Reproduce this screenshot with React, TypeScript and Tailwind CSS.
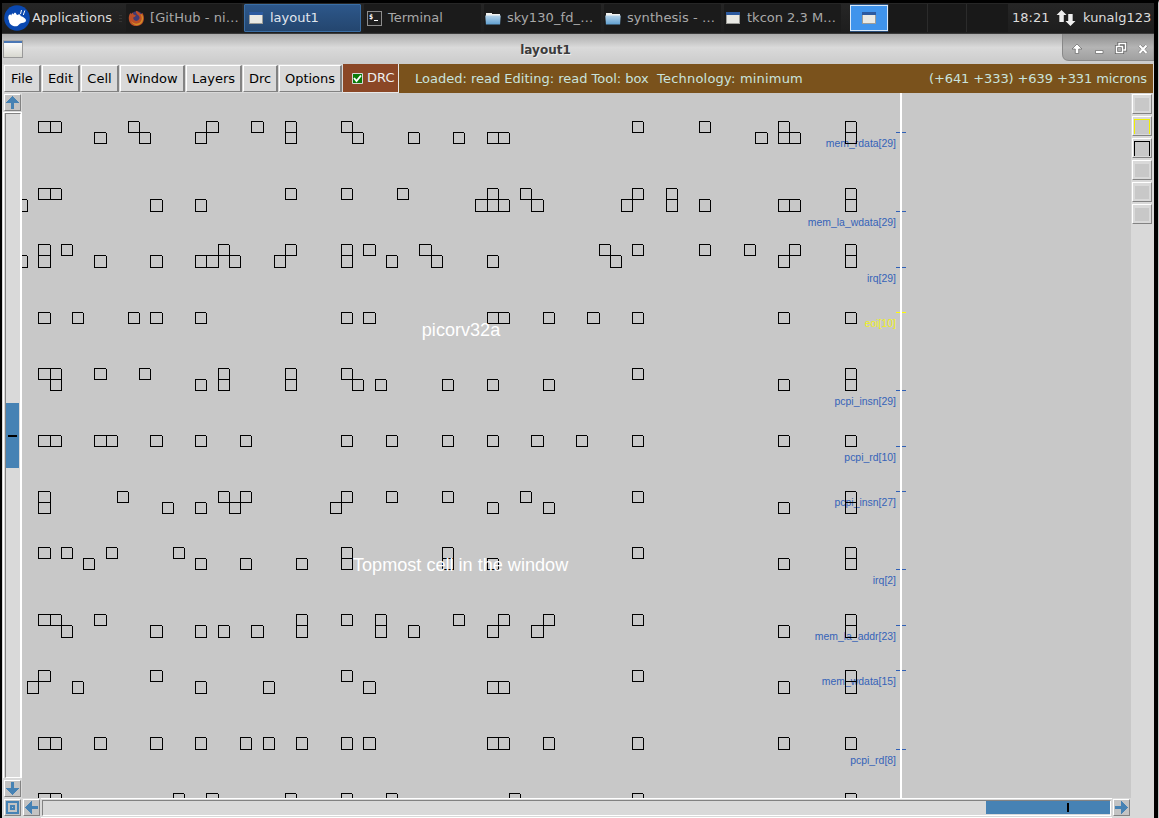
import type { ReactNode } from "react";

type Row = { y: number[]; top: number[]; bottom?: number[] };

const rows: Row[] = [
  { y: [121, 132, 143], top: [0, 1, 8, 15, 19, 22, 27, 53, 59, 66, 72], bottom: [5, 9, 14, 22, 28, 33, 37, 40, 41, 64, 66, 67, 72] },
  { y: [188, 199, 211], top: [0, 1, 22, 27, 32, 40, 43, 53, 56, 72], bottom: [-2, 10, 14, 39, 40, 41, 44, 52, 56, 59, 66, 67, 72] },
  { y: [244, 255, 267], top: [0, 2, 16, 22, 27, 29, 34, 50, 53, 59, 63, 67, 72], bottom: [-2, 0, 5, 10, 14, 15, 17, 21, 27, 31, 35, 40, 51, 66, 72] },
  { y: [312, 323], top: [0, 3, 8, 10, 14, 27, 29, 40, 41, 45, 49, 53, 66, 72] },
  { y: [368, 379, 390], top: [0, 1, 5, 9, 16, 22, 27, 53, 72], bottom: [1, 14, 16, 22, 28, 30, 36, 40, 45, 66, 72] },
  { y: [435, 446], top: [0, 1, 5, 6, 10, 14, 18, 27, 31, 36, 40, 44, 48, 53, 66, 72] },
  { y: [491, 502, 513], top: [0, 7, 16, 18, 27, 31, 36, 43, 53, 72], bottom: [0, 11, 14, 17, 26, 40, 45, 66, 72] },
  { y: [547, 558, 569], top: [0, 2, 6, 12, 27, 36, 53, 72], bottom: [4, 14, 18, 23, 27, 36, 40, 66, 72] },
  { y: [614, 625, 637], top: [0, 1, 5, 23, 27, 30, 37, 41, 45, 53, 72], bottom: [2, 10, 14, 16, 19, 23, 30, 33, 40, 44, 66, 72] },
  { y: [670, 681, 693], top: [0, 10, 27, 53, 72], bottom: [-1, 3, 14, 20, 29, 40, 41, 66, 72] },
  { y: [737, 749], top: [0, 1, 5, 10, 14, 18, 20, 23, 27, 29, 40, 41, 45, 53, 66, 72] },
  { y: [793, 804], top: [0, 1, 12, 15, 22, 27, 31, 42, 53, 72] },
];

const pins: [string, number][] = [
  ["mem_rdata[29]", 132],
  ["mem_la_wdata[29]", 211],
  ["irq[29]", 267],
  ["eoi[10]", 312],
  ["pcpi_insn[29]", 390],
  ["pcpi_rd[10]", 446],
  ["pcpi_insn[27]", 491],
  ["irq[2]", 569],
  ["mem_la_addr[23]", 625],
  ["mem_wdata[15]", 670],
  ["pcpi_rd[8]", 749],
];

const gridX = (n: number) => (n === 60 ? 710 : Math.floor(38.92 + 11.2042 * n));

function cell(n: number, y0: number, y1: number) {
  const x0 = gridX(n);
  const x1 = gridX(n + 1);
  const w = x1 - x0;
  const h = y1 - y0;
  return `M${x0} ${y0}h${w}v1h${-w}zM${x0} ${y0}h1v${h + 1}h-1zM${x0} ${y1}h${w + 1}v1h${-w - 1}zM${x1} ${y0 + 1}h1v${h}h-1z`;
}

function LayoutCanvas() {
  return (
    <svg className="block shrink-0 bg-[#c8c8c8]" width="1109" height="705" viewBox="22 93 1109 705">
      {pins.map(([name, y]) => (
        <text key={name} x="896" y={y + 15} textAnchor="end" fontSize="10.45" fontFamily="Liberation Sans, Arial, sans-serif" fill={name === "eoi[10]" ? "#f0f020" : "#3563b8"}>
          {name}
        </text>
      ))}
      <g shapeRendering="crispEdges">
        {rows.map((r) => (
          <g key={r.y[0]} fill="#000">
            <path d={r.top.map((n) => cell(n, r.y[0], r.y[1])).join("")} />
            {r.bottom && <path d={r.bottom.map((n) => cell(n, r.y[1], r.y[2])).join("")} />}
          </g>
        ))}
        {pins.map(([name, y]) => (
          <rect key={name} x="896" y={y} width="10" height="1" fill={name === "eoi[10]" ? "#ffff00" : "#2f5fb5"} />
        ))}
        <rect x="900" y="93" width="2" height="705" fill="#fff" />
      </g>
      <g fontFamily="Liberation Sans, Arial, sans-serif" fontSize="18.1" fill="#fff">
        <text x="421.8" y="336">picorv32a</text>
        <text x="353" y="571">Topmost cell in the window</text>
      </g>
    </svg>
  );
}

function WindowIcon() {
  return (
    <svg width="14" height="12" viewBox="0 0 14 12" className="shrink-0" shapeRendering="crispEdges">
      <rect width="14" height="12" fill="#9c9c98" />
      <rect width="14" height="3" fill="#2c5aa0" />
      <rect x="1" y="3" width="12" height="8" fill="#e9e9e4" />
    </svg>
  );
}

function FolderIcon() {
  return (
    <svg width="16" height="13" viewBox="0 0 16 13" className="shrink-0">
      <defs>
        <linearGradient id="folder" x1="0" y1="0" x2="0" y2="1">
          <stop offset="0" stopColor="#b5d3ea" />
          <stop offset="1" stopColor="#5f9fd0" />
        </linearGradient>
      </defs>
      <path d="M1 2V1h6v1h8v3H1z" fill="#f2f2f0" />
      <path d="M.3 3.5h15.4l-.6 9H.9z" fill="url(#folder)" />
    </svg>
  );
}

function TerminalIcon() {
  return (
    <svg width="15" height="15" viewBox="0 0 15 15" className="shrink-0">
      <rect x=".5" y=".5" width="14" height="14" fill="#202020" stroke="#8d8d8d" />
      <text x="2" y="8" fontSize="7" fontWeight="bold" fontFamily="DejaVu Sans Mono, monospace" fill="#fff">$</text>
      <path d="M7 9.5h4" stroke="#fff" />
    </svg>
  );
}

function FirefoxIcon() {
  return (
    <svg width="17" height="17" viewBox="0 0 17 17" className="shrink-0 opacity-85">
      <circle cx="8.8" cy="8" r="6.7" fill="#494083" />
      <path d="M8 .8c3 1 3.5 2.5 4.5 3.3 1 .3 1.8-1 2-1 3 5 1.300 13-5.800 13C3 16.200.5 12 .8 7.500 1 5.400 1.600 4 2.500 2.800L3.200 4.300 4.500 2.600 5.500 4.600 8 5.400 6.800 6.800 5.200 7.500C5 10 7.500 11.800 9.700 10.400 13 8.400 11.200 5.600 9.500 4.700 8.500 3.700 7.700 2.500 8 .8z" fill="#d9572a" />
      <path d="M12.500 4.100c2.200 3.400 1.500 7.700-2 9.200-4 1.300-6.700-.8-7.500-2.700.9 3 3.400 5 6.200 4.600 4.700-.6 7-5.400 5.300-9.600-.5-.9-1.200-1.400-2-1.500z" fill="#f2a427" />
    </svg>
  );
}

function Task({ icon, label, className }: { icon: ReactNode; label: string; className: string }) {
  return (
    <div className={`flex h-[28px] shrink-0 items-center rounded-[1px] whitespace-nowrap ${className}`}>
      {icon}
      <span>{label}</span>
    </div>
  );
}

function TaskBar() {
  const idle = "w-[117px] mr-[3px] bg-[#1b1b1b] text-[#a9a9a9]";
  return (
    <div className="flex h-[31px] w-[1152px] items-start border-b border-[#3a3a3a] bg-linear-to-b from-[#262626] to-[#1d1d1d] pt-px text-[13px]">
      <div className="flex h-[28px] w-[124px] shrink-0 items-center pl-[2px] text-[#dcdcdc]">
        <svg width="26" height="26" viewBox="0 0 26 26" className="shrink-0">
          <circle cx="13" cy="13" r="12.800" fill="#0a48b0" />
          <path d="M5 10c1-1 2-.5 2.500.500C7.500 8 9 8 9.500 9.500 10 7 12 7 12.500 9.500L13.500 10C15 8.500 17 9.500 16.500 11c3 1 5.500 2.500 5.500 4.500 0 1.500-2 2.500-4 2.500-1.500 0-2.500 1-4.500 3C9 22.500 5 19 5 15.500 4 14 4 11.500 5 10z" fill="#fff" />
          <path d="M16.500 9l1-4M19.300 10l1.500-4.500" stroke="#fff" strokeWidth="1" />
        </svg>
        <span className="ml-[2px] tracking-[0.05px]">Applications</span>
        <span className="ml-[7px] flex flex-col gap-[2px]">
          <i className="h-px w-[3px] bg-[#343434]" />
          <i className="h-px w-[3px] bg-[#343434]" />
          <i className="h-px w-[3px] bg-[#343434]" />
        </span>
      </div>
      <Task className="mr-[2px] w-[116px] gap-[5px] bg-[#1b1b1b] pl-[2px] tracking-[0.07px] text-[#a9a9a9]" icon={<FirefoxIcon />} label="[GitHub - ni…" />
      <Task className="mr-[3px] w-[117px] gap-[7px] border border-[#3a6ea5] bg-linear-to-b from-[#2d578a] to-[#24466f] pl-[4px] text-[#e0e6ee]" icon={<WindowIcon />} label="layout1" />
      <Task className={`${idle} gap-[6px] pl-[3px]`} icon={<TerminalIcon />} label="Terminal" />
      <Task className={`${idle} gap-[6px] pl-[1px] tracking-[0.1px]`} icon={<FolderIcon />} label="sky130_fd_…" />
      <Task className={`${idle} gap-[6px] pl-[1px] tracking-[0.07px]`} icon={<FolderIcon />} label="synthesis - …" />
      <Task className={`${idle} gap-[7px] pl-[2px]`} icon={<WindowIcon />} label="tkcon 2.3 M…" />
      <div className="ml-[6px] flex h-[28px] w-[158px] shrink-0 gap-px bg-[#2b2b2b]">
        <div className="flex w-[38px] items-center justify-center border-y border-[#2a4f7c] bg-[#4094ec]">
          <div className="flex h-[26px] w-[38px] items-center justify-center border border-[#d9e8f8]">
            <WindowIcon />
          </div>
        </div>
        <div className="w-[38px] bg-[#191919]" />
        <div className="w-[38px] bg-[#191919]" />
        <div className="w-[41px] bg-[#191919]" />
      </div>
      <div className="ml-[4px] flex h-[28px] items-center text-[#dcdcdc]">
        <span className="w-[44px]">18:21</span>
        <svg width="20" height="18" viewBox="0 0 18 18" preserveAspectRatio="none" className="mr-[7px] shrink-0 fill-[#efefef]">
          <path d="M5 1l4.500 5H7v7H3V6H.5zM13 17l4.500-5H15V5h-4v7H8.500z" />
        </svg>
        <span>kunalg123</span>
      </div>
    </div>
  );
}

function TitleBar() {
  return (
    <div className="flex h-[30px] w-[1152px] items-start bg-linear-to-b from-[#acacac] via-[#dadada] via-45% to-[#cbcbcb]">
      <div className="mt-[6px] ml-px h-[18px] w-[20px] shrink-0 border border-[#999] border-t-[#aaa] bg-linear-to-b from-white to-[#d8d8d0]">
        <div className="h-[2px] bg-[#4a77b4]" />
      </div>
      <div className="mt-[8px] grow pl-[6px] text-center text-[12px] leading-[17px] font-bold text-[#3b3b3b] [text-shadow:1px_1px_0_#eee]">
        layout1
      </div>
      <svg width="92" height="27" viewBox="0 0 92 27" className="shrink-0">
        <defs>
          <linearGradient id="controls" x1="0" y1="0" x2="0" y2="1">
            <stop offset="0" stopColor="#8e8e8e" />
            <stop offset=".5" stopColor="#b4b4b4" />
            <stop offset="1" stopColor="#9f9f9f" />
          </linearGradient>
        </defs>
        <path d="M.5 0v20q0 6.500 6.500 6.500h85V0" fill="url(#controls)" stroke="#888" />
        <g fill="#fff" stroke="#666" strokeWidth=".7">
          <path d="M15 10l5 5h-3.300v4.500h-3.400V15H10z" />
          <path d="M33.500 16.500h7.500v3h-7.500z" />
        </g>
        <g fill="none" stroke="#666" strokeWidth="3.200">
          <path d="M57 11.500v-2h6.500v6.500h-2M54.500 12.500h6v6h-6zM77.500 11.500l7 7.500M84.500 11.500l-7 7.500" />
        </g>
        <g fill="none" stroke="#fff" strokeWidth="1.500">
          <path d="M57 11.500v-2h6.500v6.500h-2M54.500 12.500h6v6h-6z" />
          <path d="M77.500 11.500l7 7.500M84.500 11.500l-7 7.500" strokeWidth="2.200" />
        </g>
      </svg>
    </div>
  );
}

const menus: [string, string][] = [
  ["File", "w-[37px]"],
  ["Edit", "w-[38px]"],
  ["Cell", "w-[38px]"],
  ["Window", "w-[65px]"],
  ["Layers", "w-[56px]"],
  ["Drc", "w-[35px]"],
  ["Options", "w-[63px]"],
];

function MenuBar() {
  return (
    <div className="flex h-[29px] w-[1152px] bg-[#d9d9d9] pr-px text-[13px] text-black">
      <div className="flex shrink-0 gap-px pt-px pb-px pl-[2px]">
        {menus.map(([label, width]) => (
          <div key={label} className={`flex items-center justify-center border-t border-r-2 border-b border-l border-t-white border-r-[#828282] border-b-[#828282] border-l-white ${width}`}>
            {label}
          </div>
        ))}
      </div>
      <div className="ml-px flex w-[56px] shrink-0 items-center border-r border-b border-[#e8e8e8] bg-[#8b4726] pl-[9px] text-[#eee]">
        <svg width="11" height="11" viewBox="0 0 11 11" className="mr-[4px]">
          <path d="M.5 10.500V.5h10v10z" fill="#0a7d0a" stroke="#d8d8d8" />
          <path d="M2 5l2.500 3L9 2.500" fill="none" stroke="#fff" strokeWidth="1.900" />
        </svg>
        DRC
      </div>
      <div className="flex grow items-center justify-between bg-[#7a521c] pr-[6px] pl-[16px] whitespace-pre text-[#c9e3dc]">
        <span>
          {"Loaded: read Editing: read Tool: box  "}
          <span className="tracking-[0.2px]">Technology: minimum</span>
        </span>
        <span className="tracking-[-0.1px]">(+641 +333) +639 +331 microns</span>
      </div>
    </div>
  );
}

const arrows = {
  up: "M7 1h1v1h1v1h1v1h1v1h1v1h1v1h1v1H9v6H6V8H1V7h1V6h1V5h1V4h1V3h1V2h1z",
  down: "M7 14h1v-1h1v-1h1v-1h1v-1h1v-1h1V8h1V7H9V1H6v6H1v1h1v1h1v1h1v1h1v1h1v1h1z",
  left: "M1 7v1h1v1h1v1h1v1h1v1h1v1h1v1h1V9h6V6H8V1H7v1H6v1H5v1H4v1H3v1H2v1z",
  right: "M14 7v1h-1v1h-1v1h-1v1h-1v1H9v1H8v1H7V9H1V6h6V1h1v1h1v1h1v1h1v1h1v1h1v1z",
  zoom: "M1 1v13h13V1zM3 3h9v9H3zM5 5h5v5H5zM7 7v1h1V7z",
};

function ArrowButton({ kind }: { kind: keyof typeof arrows }) {
  return (
    <div className="h-[17px] w-[17px] shrink-0 border border-t-white border-r-[#828282] border-b-[#828282] border-l-white bg-[#c3c3c3]">
      <svg width="15" height="15" viewBox="0 0 15 15" className="block" shapeRendering="crispEdges">
        <path d={arrows[kind]} fill="#4682b4" fillRule="evenodd" />
      </svg>
    </div>
  );
}

function VerticalScroll() {
  return (
    <div className="flex h-[705px] w-[20px] shrink-0 flex-col bg-[#d9d9d9] pt-px pl-[2px]">
      <ArrowButton kind="up" />
      <div className="-ml-px mt-[1px] flex h-[666px] w-[19px] shrink-0 flex-col border-x border-t border-white pl-px">
        <div className="h-[665px] w-[16px] border border-t-[#828282] border-r-white border-b-white border-l-[#828282] pt-[289px]">
          <div className="flex h-[65px] w-[13px] items-center justify-center bg-[#4682b4]">
            <div className="h-[2px] w-[9px] bg-black" />
          </div>
        </div>
      </div>
      <div className="mt-[2px]">
        <ArrowButton kind="down" />
      </div>
    </div>
  );
}

function HorizontalScroll() {
  return (
    <div className="flex h-[20px] w-[1152px] bg-[#d9d9d9] pl-[2px]">
      <div className="pt-px">
        <ArrowButton kind="zoom" />
      </div>
      <div className="ml-[2px] pt-px">
        <ArrowButton kind="left" />
      </div>
      <div className="ml-px h-[20px] w-[1071px] border-t border-b border-white pt-px pl-px">
        <div className="h-[16px] w-[1069px] border border-t-[#828282] border-r-white border-b-white border-l-[#828282] pl-[943px]">
          <div className="h-[13px] w-[124px] bg-[#4682b4] pt-[2px] pl-[81px]">
            <div className="h-[9px] w-[2px] bg-black" />
          </div>
        </div>
      </div>
      <div className="ml-px pt-px">
        <ArrowButton kind="right" />
      </div>
    </div>
  );
}

const swatches = [
  "border-[#d9d9d9] border-b",
  "border-[#f0f000]",
  "border-black",
  "border-[#d9d9d9] border-b",
  "border-[#d9d9d9] border-b",
  "border-[#d9d9d9] border-b",
];

function Palette() {
  return (
    <div className="flex w-[23px] shrink-0 flex-col gap-[2px] bg-[#d9d9d9] pt-px pl-px">
      {swatches.map((s, i) => (
        <div key={i} className="h-[20px] w-[20px] border border-t-white border-r-[#828282] border-b-[#828282] border-l-white bg-[#d9d9d9] px-px pt-[2px] pb-px">
          <div className={`h-full w-full border-x border-t bg-[#c8c8c8] ${s}`} />
        </div>
      ))}
    </div>
  );
}

export default function App() {
  return (
    <div className="h-[818px] w-[1159px] overflow-hidden border-t-[3px] border-r border-l-2 border-t-black border-r-[#c8c8c8] border-l-black bg-black font-['DejaVu_Sans',sans-serif]">
      <TaskBar />
      <TitleBar />
      <MenuBar />
      <div className="flex h-[705px]">
        <VerticalScroll />
        <LayoutCanvas />
        <Palette />
      </div>
      <HorizontalScroll />
    </div>
  );
}
